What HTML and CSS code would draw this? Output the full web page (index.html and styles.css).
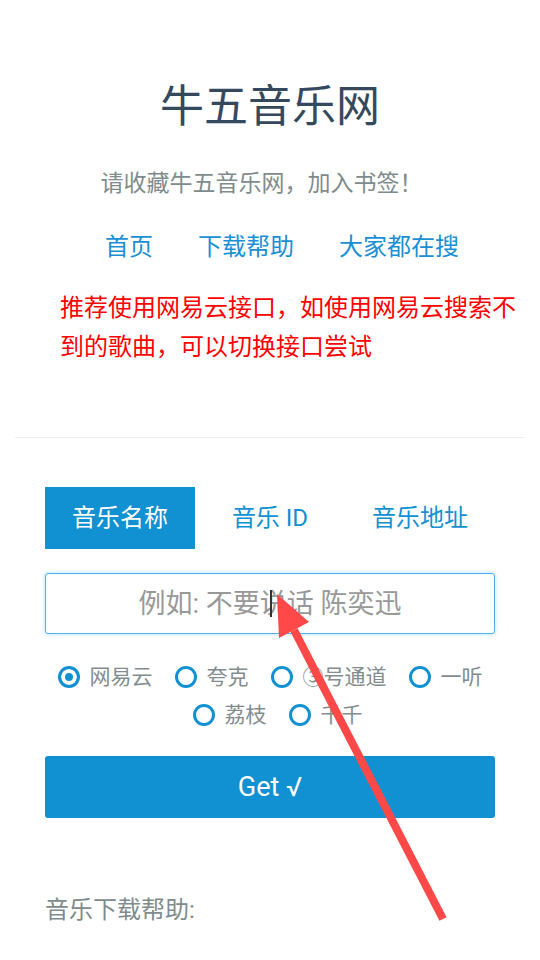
FILE: index.html
```html
<!DOCTYPE html>
<html lang="zh-CN">
<head>
  <meta charset="UTF-8" />
  <meta name="viewport" content="width=device-width, initial-scale=1.0"/>
  <title>牛五音乐网</title>
  <link rel="stylesheet" href="styles.css">
</head>
<body>
  <header class="head">
    <h1 class="title">牛五音乐网</h1>
    <p class="tip">请收藏牛五音乐网，加入书签！</p>
  </header>

  <nav class="nav">
    <a href="#">首页</a>
    <a href="#">下载帮助</a>
    <a href="#">大家都在搜</a>
  </nav>

  <p class="notice">推荐使用网易云接口，如使用网易云搜索不到的歌曲，可以切换接口尝试</p>

  <hr class="line">

  <main class="box">
    <div class="tabs">
      <span class="tab active">音乐名称</span>
      <span class="tab">音乐 ID</span>
      <span class="tab">音乐地址</span>
    </div>

    <div class="field">
      <input type="text" class="search" placeholder="例如: 不要说话 陈奕迅">
      <span class="caret"></span>
    </div>

    <div class="sources">
      <div class="row">
        <label class="radio"><input type="radio" name="src" checked> 网易云</label>
        <label class="radio"><input type="radio" name="src"> 夸克</label>
        <label class="radio"><input type="radio" name="src"> ③号通道</label>
        <label class="radio"><input type="radio" name="src"> 一听</label>
      </div>
      <div class="row row-last">
        <label class="radio"><input type="radio" name="src"> 荔枝</label>
        <label class="radio"><input type="radio" name="src"> 千千</label>
      </div>
    </div>

    <button class="get">Get √</button>

    <p class="help">音乐下载帮助:</p>
  </main>

  <svg class="arrow" width="540" height="960" viewBox="0 0 540 960">
    <line x1="443" y1="919" x2="294" y2="630" stroke="#ff4848" stroke-width="8" />
    <polygon points="277,594 309,622 279,638" fill="#ff4848" />
  </svg>
</body>
</html>
```

FILE: styles.css
```css
body {
  margin: 0;
  font-family: "Roboto", "Noto Sans CJK SC", sans-serif;
  background: #fff;
  position: relative;
}

.head {
  text-align: center;
}

.title {
  margin: 77px 0 0;
  font-size: 44px;
  line-height: 60px;
  font-weight: normal;
  color: #34495e;
}

.tip {
  margin: 27px 32px 0 15px;
  font-size: 23px;
  line-height: 40px;
  color: #7f8c8d;
}

.nav {
  margin-top: 23px;
  display: flex;
  justify-content: center;
  gap: 45px;
  padding-left: 24px;
  font-size: 24px;
  line-height: 40px;
}

.nav a {
  color: #1a8fd6;
  text-decoration: none;
}

.notice {
  margin: 22px 15px 0 60px;
  font-size: 24px;
  line-height: 38.5px;
  color: #ff0000;
}

.line {
  margin: 71px 16px 0 15px;
  border: 0;
  border-top: 1px solid #ececec;
  height: 0;
}

.box {
  margin-top: 49px;
  padding: 0 45px;
}

.tabs {
  display: flex;
}

.tab {
  flex: 1;
  text-align: center;
  font-size: 24px;
  line-height: 62px;
  color: #1190d2;
}

.tab.active {
  background: #1190d2;
  color: #fff;
}

.field {
  margin-top: 24px;
  position: relative;
}

.search {
  display: block;
  box-sizing: border-box;
  width: 100%;
  height: 61px;
  margin: 0;
  border: 1px solid #4ab4ee;
  border-radius: 3px;
  box-shadow: 0 0 4px rgba(74, 180, 238, 0.45);
  outline: none;
  text-align: center;
  font-family: "Roboto", "Noto Sans CJK SC", sans-serif;
  font-size: 27px;
  color: #333;
}

.search::placeholder {
  color: #999;
}

.caret {
  position: absolute;
  left: 225px;
  top: 17px;
  width: 2px;
  height: 27px;
  background: #333;
}

.sources {
  margin-top: 24px;
}

.row {
  display: flex;
  justify-content: center;
  gap: 22px;
  height: 38px;
  align-items: center;
}

.row-last {
  padding-left: 15px;
}

.radio {
  display: flex;
  align-items: center;
  gap: 10px;
  font-size: 21px;
  line-height: 36px;
  color: #838c8e;
}

.radio input {
  appearance: none;
  -webkit-appearance: none;
  box-sizing: border-box;
  width: 22px;
  height: 22px;
  margin: 0;
  border: 3px solid #1190d2;
  border-radius: 50%;
  background: #fff;
}

.radio input:checked {
  background: #1190d2;
  box-shadow: inset 0 0 0 4px #fff;
}

.get {
  display: block;
  width: 100%;
  height: 62px;
  margin-top: 22px;
  border: none;
  border-radius: 3px;
  background: #1190d2;
  color: #fff;
  font-family: "Roboto", "Noto Sans CJK SC", sans-serif;
  font-size: 27px;
}

.help {
  margin: 72px 0 0;
  font-size: 24px;
  line-height: 40px;
  color: #7f8c8d;
}

.arrow {
  position: absolute;
  left: 0;
  top: 0;
  pointer-events: none;
}
```
